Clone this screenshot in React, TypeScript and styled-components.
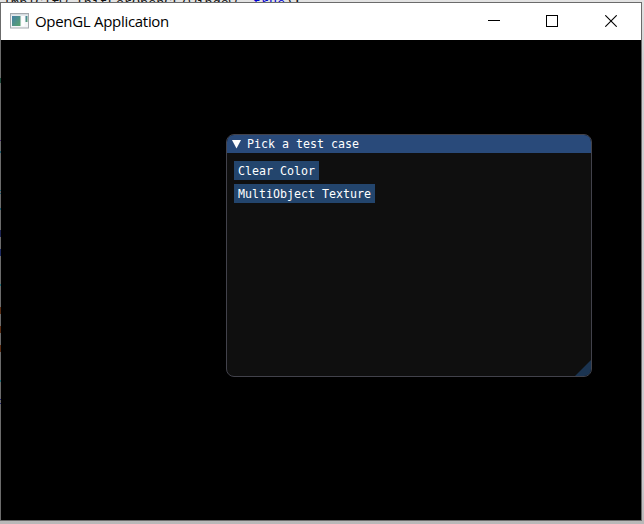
import React from "react";
import styled, { createGlobalStyle } from "styled-components";

const Global = createGlobalStyle`
  * { box-sizing: border-box; }
  body { margin: 0; overflow: hidden; background: #d2d0d2; }
`;

const Desktop = styled.div`
  width: 644px;
  height: 524px;
  overflow: hidden;
  display: flex;
  flex-direction: column;
  background: linear-gradient(#e3e3e3 0, #cfcfd1 60px, #cbc9cd 480px, #b8b8b8 524px);
`;

const EditorLine = styled.div`
  height: 2px;
  flex: none;
  overflow: hidden;
  padding-left: 3px;
  font: 13.45px "Liberation Mono", monospace;
  line-height: 7px;
  white-space: pre;
  color: #111;
`;

const Keyword = styled.span`
  color: #0000d0;
`;

const AppWindow = styled.div`
  width: 642px;
  height: 519px;
  border: 1px solid #6b6b6b;
  border-left: 0;
  background: #000;
  display: grid;
  grid-template-columns: 1px 1fr;
  flex: none;
`;

const FRAME_MARKS: [number, number, string][] = [
  [78, 5, "#1d4a3a"],
  [140, 1, "#43236b"],
  [151, 2, "#1d5a6c"],
  [190, 1, "#1d5a6c"],
  [193, 1, "#1d5a6c"],
  [208, 2, "#1d5a6c"],
  [230, 7, "#1d2453"],
  [249, 7, "#1d2a63"],
  [284, 2, "#1d6a74"],
  [307, 7, "#5a2c12"],
  [326, 7, "#5a2c12"],
  [345, 7, "#5a2c12"],
  [380, 2, "#1d6a74"],
  [399, 1, "#20206b"],
  [403, 1, "#20206b"],
];

const frameStops = FRAME_MARKS.map(([y, h, color]) => {
  const top = y - 3;
  return `#6b6b6b ${top}px, ${color} ${top}px, ${color} ${top + h}px, #6b6b6b ${top + h}px`;
}).join(", ");

const FrameEdge = styled.div`
  background: linear-gradient(#6b6b6b 0, ${frameStops});
`;

const Content = styled.div`
  display: flex;
  flex-direction: column;
`;

const TitleBar = styled.div`
  height: 37px;
  flex: none;
  background: #fff;
  display: flex;
  align-items: center;
  padding-left: 9px;
`;

const AppTitle = styled.div`
  flex: 1;
  margin-left: 5px;
  padding-bottom: 2px;
  font: 15px "Open Sans", "Noto Sans", sans-serif;
  letter-spacing: -0.3px;
  line-height: 20px;
  color: #000;
  white-space: nowrap;
`;

const CaptionButton = styled.div`
  width: 58.5px;
  height: 37px;
  padding-bottom: 1px;
  display: flex;
  align-items: center;
  justify-content: center;
`;

const Captions = styled.div`
  display: flex;
  margin-right: 1px;
`;

const IconSlot = styled.div`
  display: flex;
  padding-bottom: 1px;
`;

const Canvas = styled.div`
  flex: 1;
  padding: 94px 0 0 225px;
`;

const Panel = styled.div`
  position: relative;
  width: 366px;
  height: 243px;
  border: 1px solid #42424b;
  border-radius: 8px;
  overflow: hidden;
  background: #0f0f0f;
  font: 11.63px "DejaVu Sans Mono", monospace;
  color: #fff;
`;

const PanelHeader = styled.div`
  height: 18px;
  display: flex;
  align-items: center;
  gap: 6px;
  padding-left: 5px;
  background: #294a7a;
  line-height: 18px;
  white-space: pre;
`;

const PanelBody = styled.div`
  display: flex;
  flex-direction: column;
  align-items: flex-start;
  gap: 4px;
  padding: 8px 7px;
`;

const CaseButton = styled.button<{ $width: number }>`
  width: ${(p) => p.$width}px;
  height: 19px;
  border: 0;
  padding: 1px 0 0 4px;
  background: #23456d;
  color: inherit;
  font: inherit;
  line-height: 18px;
  text-align: left;
  white-space: pre;
`;

const ResizeGrip = styled.svg`
  position: absolute;
  right: 0;
  bottom: 0;
`;

const AppIcon = () => (
  <svg width="20" height="16" viewBox="0 0 20 16">
    <defs>
      <linearGradient id="screen" x1="0" y1="0" x2="1" y2="1">
        <stop offset="0" stopColor="#447fa6" />
        <stop offset="1" stopColor="#58a46b" />
      </linearGradient>
    </defs>
    <rect x="0.5" y="0.5" width="18" height="14.5" fill="#f4f6f8" stroke="#a4a9ae" />
    <rect x="1" y="1" width="17" height="1.5" fill="#d5dce0" />
    <rect x="2" y="3" width="8.5" height="10" fill="url(#screen)" />
    <rect x="11.5" y="3" width="3" height="10" fill="#fff" />
    <rect x="15.5" y="3" width="2" height="6" fill="url(#screen)" />
  </svg>
);

export default function App() {
  return (
    <Desktop>
      <Global />
      <EditorLine>
        ImplGlfw_InitForOpenGL(window, <Keyword>true</Keyword>);
      </EditorLine>
      <AppWindow>
        <FrameEdge />
        <Content>
          <TitleBar>
            <IconSlot>
              <AppIcon />
            </IconSlot>
            <AppTitle>OpenGL Application</AppTitle>
            <Captions>
              <CaptionButton>
                <svg width="12" height="12" shapeRendering="crispEdges">
                  <path d="M0 5.5H12" stroke="#000" />
                </svg>
              </CaptionButton>
              <CaptionButton>
                <svg width="12" height="12" shapeRendering="crispEdges">
                  <rect x="0.5" y="0.5" width="11" height="11" fill="none" stroke="#000" />
                </svg>
              </CaptionButton>
              <CaptionButton>
                <svg width="12" height="12">
                  <path d="M0.3 0.3L11.7 11.7M11.7 0.3L0.3 11.7" stroke="#000" strokeWidth="1.1" />
                </svg>
              </CaptionButton>
            </Captions>
          </TitleBar>
          <Canvas>
            <Panel>
              <PanelHeader>
                <svg width="9" height="9">
                  <path d="M0 0H9L4.5 8.5Z" fill="#fff" />
                </svg>
                <span>Pick a test case</span>
              </PanelHeader>
              <PanelBody>
                <CaseButton $width={85}>Clear Color</CaseButton>
                <CaseButton $width={141}>MultiObject Texture</CaseButton>
              </PanelBody>
              <ResizeGrip width="16" height="16">
                <path d="M16 0V16H0Z" fill="#1b3451" />
              </ResizeGrip>
            </Panel>
          </Canvas>
        </Content>
      </AppWindow>
    </Desktop>
  );
}
